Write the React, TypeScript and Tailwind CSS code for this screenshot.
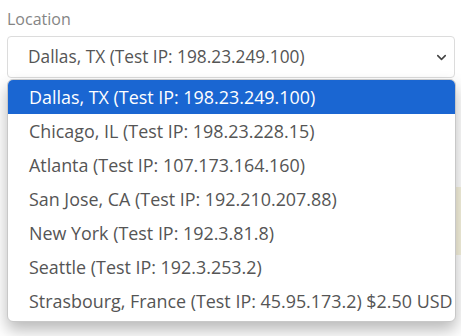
import { ChevronDown } from "lucide-react";

const options = [
  "Dallas, TX (Test IP: 198.23.249.100)",
  "Chicago, IL (Test IP: 198.23.228.15)",
  "Atlanta (Test IP: 107.173.164.160)",
  "San Jose, CA (Test IP: 192.210.207.88)",
  "New York (Test IP: 192.3.81.8)",
  "Seattle (Test IP: 192.3.253.2)",
  "Strasbourg, France (Test IP: 45.95.173.2) $2.50 USD",
];

export default function App() {
  return (
    <div className="w-[461px] h-[336px] bg-white overflow-hidden relative" style={{ fontFamily: "'Open Sans', sans-serif" }}>
      <div className="pl-[7px] pr-[6px] pt-[8px]">
        <label className="block text-[16px] text-[#858585] leading-[22px] mb-[6px]">Location</label>
        <div className="h-[42px] border border-[#dcdcdc] rounded-[4px] flex items-center justify-between pl-[20px] pr-[5px] text-[17.3px] text-[#555]">
          <span>{options[0]}</span>
          <ChevronDown size={15} strokeWidth={2.5} className="text-[#444]" />
        </div>
      </div>
      <div className="absolute right-0 top-[187px] w-[8px] h-[68px] bg-[#f7f3de] border-l border-[#e6e0c0]" />
      <div className="absolute left-[7px] top-[79px] w-[449px] bg-white rounded-[6px] shadow-[0_8px_16px_rgba(0,0,0,0.28)] border border-[#c8c8c8] overflow-hidden pb-[3px]">
        {options.map((o, i) => (
          <div
            key={o}
            className={
              "h-[34px] flex items-center pl-[21px] text-[17.9px] whitespace-nowrap " +
              (i === 0 ? "bg-[#1a66d2] text-white" : "text-[#555]")
            }
          >
            {o}
          </div>
        ))}
      </div>
    </div>
  );
}
